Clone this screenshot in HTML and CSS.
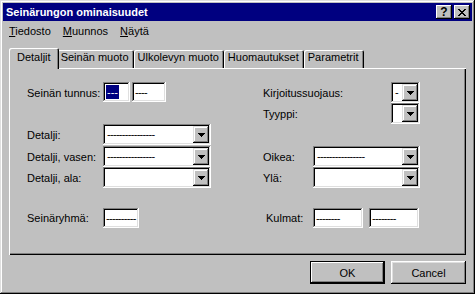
FILE: index.html
```html
<!DOCTYPE html>
<html>
<head>
<title>Seinärungon ominaisuudet</title>
<meta charset='utf-8'/>
<link rel="stylesheet" href="styles.css">
</head>
<body>
<div class="window">
	<div class="titlebar">
		<span class="title">Seinärungon ominaisuudet</span>
		<div class="tb-btns">
			<span class="tb-btn help">?</span>
			<span class="tb-btn">
				<svg width="8" height="7" viewBox="0 0 8 7" shape-rendering="crispEdges">
					<path d="M0 0h2v1H0zM6 0h2v1H6zM1 1h2v1H1zM5 1h2v1H5zM2 2h4v1H2zM3 3h2v1H3zM2 4h4v1H2zM1 5h2v1H1zM5 5h2v1H5zM0 6h2v1H0zM6 6h2v1H6z" fill="#000"/>
				</svg>
			</span>
		</div>
	</div>
	<div class="menubar">
		<span class="menu"><u>T</u>iedosto</span>
		<span class="menu"><u>M</u>uunnos</span>
		<span class="menu"><u>N</u>äytä</span>
	</div>
	<div class="content">
		<div class="tabs">
			<span class="tab active">Detaljit</span>
			<span class="tab">Seinän muoto</span>
			<span class="tab">Ulkolevyn muoto</span>
			<span class="tab">Huomautukset</span>
			<span class="tab">Parametrit</span>
		</div>
		<div class="panel">
			<div class="form">
				<!-- vasen sarake -->
				<span class="lbl r1">Seinän tunnus:</span>
				<div class="pair r1 c2">
					<span class="field w27"><span class="sel">---</span></span>
					<span class="field w34"><span class="dash">----</span></span>
				</div>

				<span class="lbl r3">Detalji:</span>
				<div class="combo r3 c2 w108"><span class="val dash">----------------</span><span class="drop"><svg width="7" height="4" viewBox="0 0 7 4" shape-rendering="crispEdges"><path d="M0 0h7v1H0zM1 1h5v1H1zM2 2h3v1H2zM3 3h1v1H3z" fill="#000"/></svg></span></div>

				<span class="lbl r4">Detalji, vasen:</span>
				<div class="combo r4 c2 w108"><span class="val dash">----------------</span><span class="drop"><svg width="7" height="4" viewBox="0 0 7 4" shape-rendering="crispEdges"><path d="M0 0h7v1H0zM1 1h5v1H1zM2 2h3v1H2zM3 3h1v1H3z" fill="#000"/></svg></span></div>

				<span class="lbl r5">Detalji, ala:</span>
				<div class="combo r5 c2 w108"><span class="val"></span><span class="drop"><svg width="7" height="4" viewBox="0 0 7 4" shape-rendering="crispEdges"><path d="M0 0h7v1H0zM1 1h5v1H1zM2 2h3v1H2zM3 3h1v1H3z" fill="#000"/></svg></span></div>

				<span class="lbl r7">Seinäryhmä:</span>
				<div class="pair r7 c2">
					<span class="field w36"><span class="dash">----------</span></span>
				</div>

				<!-- oikea sarake -->
				<div class="split r1">
					<span class="lbl">Kirjoitussuojaus:</span>
					<div class="combo w29"><span class="val">-</span><span class="drop"><svg width="7" height="4" viewBox="0 0 7 4" shape-rendering="crispEdges"><path d="M0 0h7v1H0zM1 1h5v1H1zM2 2h3v1H2zM3 3h1v1H3z" fill="#000"/></svg></span></div>
				</div>
				<div class="split r2">
					<span class="lbl">Tyyppi:</span>
					<div class="combo w29"><span class="val"></span><span class="drop"><svg width="7" height="4" viewBox="0 0 7 4" shape-rendering="crispEdges"><path d="M0 0h7v1H0zM1 1h5v1H1zM2 2h3v1H2zM3 3h1v1H3z" fill="#000"/></svg></span></div>
				</div>

				<span class="lbl r4 c3">Oikea:</span>
				<div class="combo r4 c4 w107"><span class="val dash">----------------</span><span class="drop"><svg width="7" height="4" viewBox="0 0 7 4" shape-rendering="crispEdges"><path d="M0 0h7v1H0zM1 1h5v1H1zM2 2h3v1H2zM3 3h1v1H3z" fill="#000"/></svg></span></div>

				<span class="lbl r5 c3">Ylä:</span>
				<div class="combo r5 c4 w107"><span class="val"></span><span class="drop"><svg width="7" height="4" viewBox="0 0 7 4" shape-rendering="crispEdges"><path d="M0 0h7v1H0zM1 1h5v1H1zM2 2h3v1H2zM3 3h1v1H3z" fill="#000"/></svg></span></div>

				<span class="lbl r7 c3 kulmat">Kulmat:</span>
				<div class="pair r7 c4 wide">
					<span class="field w50"><span class="dash">--------</span></span>
					<span class="field w50"><span class="dash">--------</span></span>
				</div>
			</div>
		</div>
		<div class="buttons">
			<span class="button default">OK</span>
			<span class="button">Cancel</span>
		</div>
	</div>
</div>
</body>
</html>
```
FILE: styles.css
```css
html, body {
	margin: 0;
	padding: 0;
	background: #c0c0c0;
}
body {
	font-family: "Liberation Sans", Arial, sans-serif;
	font-size: 11px;
	color: #000;
}
.window {
	width: 475px;
	height: 294px;
	box-sizing: border-box;
	padding: 3px;
	background: #c0c0c0;
	box-shadow: inset -1px -1px #000, inset 1px 1px #dfdfdf, inset -2px -2px #808080, inset 2px 2px #fff;
	display: flex;
	flex-direction: column;
}

/* otsikkopalkki */
.titlebar {
	height: 18px;
	background: #000080;
	color: #fff;
	display: flex;
	align-items: center;
	justify-content: space-between;
	padding: 0 2px 0 3px;
}
.title {
	font-weight: bold;
}
.tb-btns {
	display: flex;
	gap: 2px;
}
.tb-btn {
	width: 16px;
	height: 14px;
	background: #c0c0c0;
	box-shadow: inset -1px -1px #000, inset 1px 1px #fff, inset -2px -2px #808080;
	display: flex;
	align-items: center;
	justify-content: center;
	color: #000;
}
.tb-btn.help {
	font-weight: bold;
	font-size: 12px;
	line-height: 14px;
}

/* valikko */
.menubar {
	height: 19px;
	display: flex;
	align-items: center;
}
.menu {
	padding: 0 6px;
}

.content {
	padding: 8px 6px 0;
}

/* välilehdet */
.tabs {
	display: flex;
	align-items: flex-end;
	height: 20px;
	padding-left: 2px;
	position: relative;
	z-index: 1;
}
.tab {
	height: 18px;
	box-sizing: border-box;
	padding: 1px 5px 0 4px;
	line-height: 13px;
	white-space: nowrap;
	border-radius: 2px 2px 0 0;
	box-shadow: inset 1px 1px #fff, inset -1px 0 #000, inset -2px 0 #808080;
}
.tab.active {
	height: 21px;
	margin: 0 -2px -1px -2px;
	padding: 3px 8px 0 8px;
	background: #c0c0c0;
	position: relative;
	z-index: 2;
}
.panel {
	height: 187px;
	box-sizing: border-box;
	box-shadow: inset 1px 1px #fff, inset -1px -1px #000, inset -2px -2px #808080;
}

/* lomake */
.form {
	display: grid;
	grid-template-columns: 76px 160px 50px 107px;
	grid-template-rows: 21px 21px 22px 21px 21px 20px 20px;
	padding: 14px 0 0 18px;
}
.lbl {
	align-self: center;
	white-space: nowrap;
	grid-column: 1;
}
.r1 { grid-row: 1; }
.r2 { grid-row: 2; }
.r3 { grid-row: 3; }
.r4 { grid-row: 4; }
.r5 { grid-row: 5; }
.r7 { grid-row: 7; }
.c2 { grid-column: 2; }
.c3 { grid-column: 3; }
.c4 { grid-column: 4; }
.kulmat {
	padding-left: 3px;
}
.pair {
	display: flex;
	gap: 2px;
	align-items: flex-start;
}
.pair.wide {
	gap: 6px;
}
.split {
	grid-column: 3 / 5;
	display: flex;
	justify-content: space-between;
	align-items: flex-start;
}
.split .lbl {
	align-self: center;
}

.field {
	height: 20px;
	box-sizing: border-box;
	padding: 2px 3px;
	background: #fff;
	line-height: 16px;
	box-shadow: inset -1px -1px #fff, inset 1px 1px #808080, inset -2px -2px #dfdfdf, inset 2px 2px #000;
	overflow: hidden;
	white-space: nowrap;
}
.w27 { width: 27px; }
.w34 { width: 34px; }
.w36 { width: 36px; }
.w50 { width: 50px; }
.w29 { width: 29px; }
.w107 { width: 107px; }
.w108 { width: 108px; }
.sel {
	background: #000080;
	color: #fff;
	padding: 1px 1px;
}
.dash {
	letter-spacing: -0.7px;
}

.combo {
	height: 21px;
	box-sizing: border-box;
	padding: 2px;
	display: flex;
	background: #fff;
	box-shadow: inset -1px -1px #fff, inset 1px 1px #808080, inset -2px -2px #dfdfdf, inset 2px 2px #000;
}
.combo .val {
	flex: 1;
	padding-left: 2px;
	line-height: 17px;
	overflow: hidden;
	white-space: nowrap;
}
.drop {
	width: 16px;
	height: 17px;
	background: #c0c0c0;
	box-shadow: inset -1px -1px #000, inset 1px 1px #dfdfdf, inset -2px -2px #808080, inset 2px 2px #fff;
	display: flex;
	align-items: center;
	justify-content: center;
}

/* painikkeet */
.buttons {
	display: flex;
	justify-content: flex-end;
	gap: 6px;
	margin-top: 6px;
}
.button {
	width: 75px;
	height: 23px;
	box-sizing: border-box;
	display: flex;
	align-items: center;
	justify-content: center;
	box-shadow: inset -1px -1px #000, inset 1px 1px #fff, inset -2px -2px #808080, inset 2px 2px #dfdfdf;
}
.button.default {
	border: 1px solid #000;
	box-shadow: inset -1px -1px #000, inset 1px 1px #fff, inset -2px -2px #808080;
}
```
